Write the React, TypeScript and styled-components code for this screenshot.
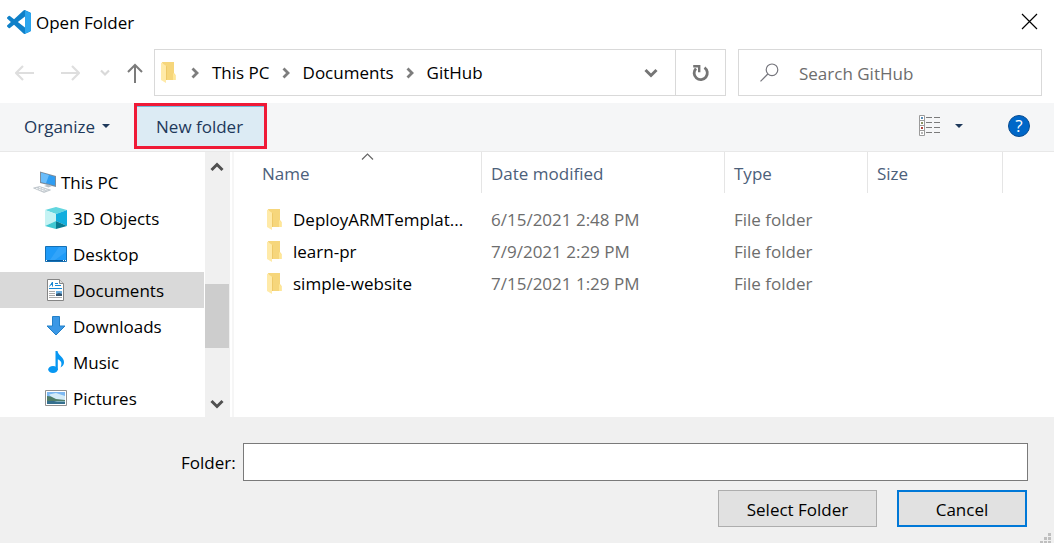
import React from 'react';
import styled, { createGlobalStyle, css } from 'styled-components';

const GlobalStyle = createGlobalStyle`
  * { box-sizing: border-box; }
  body {
    margin: 0;
    background: #ffffff;
    color: #000000;
    font-family: 'Open Sans', 'Noto Sans', sans-serif;
    font-size: 17px;
    line-height: 24px;
  }
  button, input {
    font: inherit;
    color: inherit;
  }
  svg { display: block; flex: none; }
`;

const Dialog = styled.main`
  display: flex;
  flex-direction: column;
  min-height: 100vh;
`;

const PlainButton = styled.button`
  display: flex;
  align-items: center;
  padding: 0;
  border: 0;
  background: transparent;
  white-space: nowrap;
`;

const Label = styled.span`
  padding-top: 2px;
  white-space: nowrap;
`;

/* Title bar */
const TitleBar = styled.header`
  display: flex;
  align-items: center;
  gap: 5px;
  height: 49px;
  padding: 0 16px 6px 7px;
`;

const Title = styled.h1`
  flex: 1;
  margin: 0;
  padding-top: 2px;
  font-size: 17px;
  font-weight: 400;
`;

/* Navigation row */
const NavRow = styled.nav`
  display: flex;
  align-items: center;
  height: 54px;
  padding: 0 12px 7px 15px;
`;

const History = styled.div`
  display: grid;
  grid-template-columns: 46px 39px 27px 16px;
  align-items: center;
  margin-right: 11px;
`;

const AddressBar = styled.div`
  display: flex;
  flex: 1;
  height: 47px;
  border: 1px solid #d9d9d9;
`;

const Crumbs = styled.div`
  display: flex;
  flex: 1;
  align-items: center;
  padding: 0 17px 0 6px;
`;

const CrumbList = styled.div`
  display: flex;
  gap: 12px;
  margin-left: 15px;
`;

const Crumb = styled(PlainButton)`
  gap: 13px;
`;

const Spacer = styled.div`
  flex: 1;
`;

const RefreshButton = styled(PlainButton)`
  justify-content: center;
  width: 50px;
  border-left: 1px solid #d9d9d9;
`;

const SearchBox = styled.label`
  display: flex;
  align-items: center;
  gap: 20px;
  width: 304px;
  height: 47px;
  margin-left: 12px;
  padding-left: 21px;
  border: 1px solid #d9d9d9;
`;

const SearchInput = styled.input`
  flex: 1;
  min-width: 0;
  padding: 2px 0 0;
  border: 0;
  outline: 0;
  background: transparent;
  &::placeholder { color: #6d6d6d; opacity: 1; }
`;

/* Command bar */
const CommandBar = styled.div`
  display: flex;
  align-items: center;
  height: 49px;
  padding: 0 24px 3px;
  border-bottom: 1px solid #e8e8e8;
  background: #f5f6f7;
  color: #1e395b;
`;

const OrganizeButton = styled(PlainButton)`
  gap: 7px;
  margin-right: 24px;
`;

const NewFolderButton = styled(PlainButton)`
  justify-content: center;
  width: 133px;
  height: 46px;
  padding-right: 2px;
  border: 3px solid #ef1a37;
  background: #dcebf4;
  box-shadow: inset 0 1px #70b9dd;
`;

const ViewButton = styled(PlainButton)`
  gap: 15px;
  margin-right: 45px;
`;

/* Body */
const Body = styled.div`
  display: flex;
  flex: 1;
`;

const Sidebar = styled.aside`
  width: 204px;
  padding: 12px 0 1px;
`;

const SidebarItem = styled(PlainButton)<{ $root?: boolean; $selected?: boolean }>`
  gap: 6px;
  width: 100%;
  height: 36px;
  padding-left: 45px;
  ${({ $root }) => $root && css`
    gap: 5px;
    padding-left: 33px;
  `}
  background: ${({ $selected }) => ($selected ? '#d9d9d9' : 'transparent')};
`;

const ScrollTrack = styled.div`
  display: flex;
  flex-direction: column;
  align-items: center;
  width: 25px;
  margin-left: 1px;
  padding: 10px 1px 8px 0;
  background: #f0f0f0;
`;

const ScrollThumb = styled.div`
  width: 100%;
  height: 64px;
  margin: 112px 0 auto;
  background: #cdcdcd;
`;

const Divider = styled.div`
  width: 2px;
  margin: 0 0 0 2px;
  background: #f6f6f6;
`;

const FilePane = styled.section`
  flex: 1;
  min-width: 0;
`;

const FileTable = styled.table`
  width: 100%;
  table-layout: fixed;
  border-collapse: separate;
  border-spacing: 0;
  color: #6d6d6d;
`;

const Col = styled.col<{ $width?: number }>`
  width: ${({ $width }) => ($width ? `${$width}px` : 'auto')};
`;

const HeadCell = styled.th<{ $first?: boolean }>`
  position: relative;
  height: 41px;
  padding: 2px 0 0 ${({ $first }) => ($first ? 28 : 9)}px;
  border-right: 1px solid #e5e5e5;
  color: #4c607a;
  font-weight: 400;
  text-align: left;
  &:last-child { border-right: 0; }
`;

const SortMark = styled.span`
  position: absolute;
  top: 1px;
  left: 127px;
`;

const GapRow = styled.tr`
  height: 10px;
`;

const Cell = styled.td`
  height: 32px;
  padding: 2px 0 0 9px;
  white-space: nowrap;
`;

const NameCell = styled.td`
  height: 32px;
  padding: 0 16px 0 33px;
  color: #000000;
`;

const FileName = styled.div`
  display: flex;
  align-items: center;
  gap: 11px;
`;

/* Footer */
const Footer = styled.footer`
  position: relative;
  padding: 26px 26px 16px 181px;
  background: #f0f0f0;
`;

const FolderField = styled.label`
  display: flex;
  align-items: center;
  gap: 7px;
`;

const FolderInput = styled.input`
  flex: 1;
  min-width: 0;
  height: 38px;
  padding: 0 8px;
  border: 1px solid #7a7a7a;
  background: #ffffff;
`;

const Actions = styled.div`
  display: flex;
  justify-content: flex-end;
  gap: 20px;
  margin: 9px 1px 0 0;
`;

const ActionButton = styled.button<{ $focused?: boolean }>`
  width: ${({ $focused }) => ($focused ? 130 : 159)}px;
  height: 37px;
  padding: 2px 0 0;
  border: ${({ $focused }) => ($focused ? '2px solid #0078d7' : '1px solid #adadad')};
  background: #e1e1e1;
`;

const Grip = styled.span`
  position: absolute;
  right: 3px;
  bottom: 0;
`;

/* Icons */
const CodeLogo = () => (
  <svg width="24" height="24" viewBox="0 0 24 24">
    <path fill="#0f80c8" fillRule="evenodd" d="M23.15 2.587L18.21.21a1.494 1.494 0 0 0-1.705.29l-9.46 8.63-4.12-3.128a.999.999 0 0 0-1.276.057L.327 7.261A1 1 0 0 0 .326 8.74L3.899 12 .326 15.26a1 1 0 0 0 .001 1.479L1.65 17.94a.999.999 0 0 0 1.276.057l4.12-3.128 9.46 8.63a1.492 1.492 0 0 0 1.704.29l4.942-2.377A1.5 1.5 0 0 0 24 20.06V3.939a1.5 1.5 0 0 0-.85-1.352zm-5.146 14.861L10.826 12l7.178-5.448v10.896z" />
    <path fill="#2ba5ee" d="M18 0.5L23.3 2.7Q24 3 24 4v16q0 1-.8 1.4L18 23.8z" />
  </svg>
);

const CloseIcon = () => (
  <svg width="17" height="17" viewBox="0 0 17 17" stroke="#000" strokeWidth="1.2">
    <path d="M1 1l15 15M16 1L1 16" />
  </svg>
);

const ArrowIcon = ({ forward }: { forward?: boolean }) => (
  <svg width="19" height="16" viewBox="0 0 19 16" fill="none" stroke="#dedede" strokeWidth="2.2">
    <path d={forward ? 'M0 8h17.5M11 1l7 7-7 7' : 'M19 8H1.5M8 1L1 8l7 7'} />
  </svg>
);

const UpIcon = () => (
  <svg width="16" height="20" viewBox="0 0 16 20" fill="none" stroke="#7b7b7b" strokeWidth="2">
    <path d="M8 20V2M1 9l7-7 7 7" />
  </svg>
);

const SmallChevron = () => (
  <svg width="10" height="8" viewBox="0 0 10 8" fill="none" stroke="#d9d9d9" strokeWidth="2.2">
    <path d="M1 1.5l4 4 4-4" />
  </svg>
);

const CrumbChevron = () => (
  <svg width="8" height="12" viewBox="0 0 8 12" fill="none" stroke="#7d7d7d" strokeWidth="2.8">
    <path d="M1.500 1.500L6 6l-4.500 4.500" />
  </svg>
);

const Chevron = ({ up, color }: { up?: boolean; color: string }) => (
  <svg width="14" height="10" viewBox="0 0 14 10" fill="none" stroke={color} strokeWidth="3">
    <path d={up ? 'M1.500 8L7 2.500 12.500 8' : 'M1.500 2L7 7.500 12.500 2'} />
  </svg>
);

const RefreshIcon = () => (
  <svg width="18" height="18" viewBox="0 0 18 18" fill="none" stroke="#757575" strokeWidth="2.800">
    <path d="M12.500 3.600a6.600 6.600 0 1 1-8.500.8" />
    <path d="M1.200 2.200h6v6" strokeWidth="2.400" />
  </svg>
);

const SearchIcon = () => (
  <svg width="19" height="19" viewBox="0 0 19 19" fill="none" stroke="#75757c" strokeWidth="1.200">
    <circle cx="12" cy="6.800" r="5.800" />
    <path d="M7.800 11L.5 18.300" />
  </svg>
);

const Triangle = () => (
  <svg width="8" height="4" viewBox="0 0 8 4" fill="#1e395b">
    <path d="M0 0h8L4 4z" />
  </svg>
);

const ViewIcon = () => (
  <svg width="21" height="21" viewBox="0 0 21 21">
    <path fill="#fff" stroke="#9b9b9b" d="M.5.5h5v20h-5zM.5 5.500h5M.5 10.500h5M.5 15.500h5" />
    <path fill="#5a8fb8" d="M2 2h2v2H2z" />
    <path fill="#8a9463" d="M2 7h2v2H2z" />
    <path fill="#b0453c" d="M2 12h2v2H2z" />
    <path fill="#b5b5b5" d="M2 17h2v2H2z" />
    <path stroke="#7b7b7b" d="M7 2.500h6M15 2.500h6M7 7.500h6M15 7.500h6M7 12.500h6M15 12.500h6M7 17.500h6M15 17.500h6" />
  </svg>
);

const HelpButton = styled(PlainButton)`
  justify-content: center;
  width: 22px;
  height: 22px;
  border: 1px solid #084c91;
  border-radius: 50%;
  background: #0067c8;
  color: #ffffff;
  line-height: 20px;
`;

const FolderIcon = () => (
  <svg width="15" height="21" viewBox="0 0 15 21">
    <path fill="#f6d67b" d="M1 0h12v11l1.500 2v5H5z" />
    <path fill="#ffe797" d="M12 11l2.500 2v5H12z" />
    <path fill="#ffeaa8" d="M0 .500l5 3.200V21l-5-3z" />
    <path fill="#edc664" d="M5 3.700l.8 1V18H5z" />
  </svg>
);

const ComputerIcon = () => (
  <svg width="23" height="22" viewBox="0 0 23 22">
    <path fill="#7d8c9a" d="M7 .5l16 4.500v11L7 12z" />
    <path fill="#2f9df2" d="M8 1.800l14 4v8.700L8 11z" />
    <path fill="#6bbdfa" d="M8 1.800l8 2.300-3 8.100L8 11z" />
    <path fill="#b8c1c8" d="M11 15l4-1.500 4 1.500-3.500 1.500z" />
    <path fill="#cbd1d6" stroke="#a5afb7" strokeWidth=".5" d="M.5 17l6-1.500 11 3.500-6.500 2.500z" />
    <path stroke="#f3f5f6" d="M3 17.300l9 3M6 16.300l9 3" strokeDasharray="2 1" />
  </svg>
);

const CubeIcon = () => (
  <svg width="22" height="22" viewBox="0 0 22 22">
    <path fill="#62d6df" d="M0 3l11-3 11 3-11 4z" />
    <path fill="#c5f3f4" d="M0 3l11 4v7L0 19z" />
    <path fill="#12aede" d="M22 3L11 7v7l11 5z" />
    <path fill="#41c8d2" d="M0 19l11-5v8z" />
    <path fill="#087b91" d="M22 19l-11-5v8z" />
  </svg>
);

const DesktopIcon = () => (
  <svg width="22" height="16" viewBox="0 0 22 16">
    <path fill="#1f9bf8" stroke="#1470b5" d="M.5.5h21v15H.5z" />
    <path fill="#45adfb" d="M14 1h7v5L10 14H5z" opacity=".5" />
    <path fill="#075a9c" d="M1 14h20v1H1z" />
    <path fill="#fff" d="M1 14h1v1H1zM18 14h1v1h-1zM20 14h1v1h-1z" />
  </svg>
);

const DocumentIcon = () => (
  <svg width="22" height="22" viewBox="0 0 22 22">
    <path fill="#fff" stroke="#858585" d="M2.500.5h12l4 4v17h-16z" />
    <path fill="#ddd" stroke="#858585" d="M14.500.5v4h4" />
    <path fill="none" stroke="#1787d4" d="M4.500 7.500L7.500 3v4.500M6 5.500h1.500" />
    <path stroke="#1787d4" d="M10 4.500h3M10 6.500h6M4 9.500h13" />
    <path stroke="#aaa" d="M4 12.500h6M4 14.500h6M4 16.500h6M4 18.500h13" />
    <path fill="#6badde" d="M11 12h6v5h-6z" />
    <path fill="#35546e" d="M11 17v-2l3-1 3 1v2z" />
  </svg>
);

const DownloadIcon = () => (
  <svg width="22" height="20" viewBox="0 0 22 20">
    <path fill="#3b98e6" stroke="#2380c8" d="M7.500.5h7v9.500H20l-9 9-9-9h5.500z" />
  </svg>
);

const MusicIcon = () => (
  <svg width="22" height="22" viewBox="0 0 22 22" fill="#0797f2">
    <ellipse cx="8" cy="18.500" rx="4.800" ry="3.500" />
    <path d="M10.500 0h2c.5 4.500 7 6.500 6.500 11.500 0 2.200-1.500 4-3.500 5 1.500-3.200 1.600-6.300-2.700-8.200V19h-2.300z" />
  </svg>
);

const PictureIcon = () => (
  <svg width="22" height="16" viewBox="0 0 22 16">
    <path fill="#fff" stroke="#919191" d="M.5.5h21v15H.5z" />
    <path fill="#7db8f2" d="M2 2h18v12H2z" />
    <path fill="#d3ebf8" d="M4 4.500l7-1.500 9 3v4H9z" />
    <path fill="#4f7c67" d="M2 6l4 .5 5 2.500 9 1v1.500H2z" />
    <path fill="#356f8e" d="M2 11h18v3H2z" />
    <path fill="#80aebd" d="M9 11h11v1H12z" />
  </svg>
);

const SortIcon = () => (
  <svg width="13" height="7" viewBox="0 0 13 7" fill="none" stroke="#666" strokeWidth="1.200">
    <path d="M1 6.500l5.500-5.500L12 6.500" />
  </svg>
);

const GripIcon = () => (
  <svg width="11" height="10" viewBox="0 0 11 10" fill="#bfbfbf">
    <path d="M8 0h3v3H8zM4 4h3v3H4zM8 4h3v3H8zM0 8h3v2H0zM4 8h3v2H4zM8 8h3v2H8z" />
  </svg>
);

const places = [
  { label: 'This PC', icon: <ComputerIcon />, root: true },
  { label: '3D Objects', icon: <CubeIcon /> },
  { label: 'Desktop', icon: <DesktopIcon /> },
  { label: 'Documents', icon: <DocumentIcon />, selected: true },
  { label: 'Downloads', icon: <DownloadIcon /> },
  { label: 'Music', icon: <MusicIcon /> },
  { label: 'Pictures', icon: <PictureIcon /> },
];

const files = [
  { name: 'DeployARMTemplat...', modified: '6/15/2021 2:48 PM' },
  { name: 'learn-pr', modified: '7/9/2021 2:29 PM' },
  { name: 'simple-website', modified: '7/15/2021 1:29 PM' },
];

export default function App() {
  return (
    <Dialog>
      <GlobalStyle />
      <TitleBar>
        <CodeLogo />
        <Title>Open Folder</Title>
        <PlainButton aria-label="Close"><CloseIcon /></PlainButton>
      </TitleBar>

      <NavRow>
        <History>
          <PlainButton aria-label="Back"><ArrowIcon /></PlainButton>
          <PlainButton aria-label="Forward"><ArrowIcon forward /></PlainButton>
          <PlainButton aria-label="Recent locations"><SmallChevron /></PlainButton>
          <PlainButton aria-label="Up"><UpIcon /></PlainButton>
        </History>
        <AddressBar>
          <Crumbs>
            <FolderIcon />
            <CrumbList>
              {['This PC', 'Documents', 'GitHub'].map((crumb) => (
                <Crumb key={crumb}><CrumbChevron />{crumb}</Crumb>
              ))}
            </CrumbList>
            <Spacer />
            <PlainButton aria-label="Previous locations"><Chevron color="#757575" /></PlainButton>
          </Crumbs>
          <RefreshButton aria-label="Refresh"><RefreshIcon /></RefreshButton>
        </AddressBar>
        <SearchBox>
          <SearchIcon />
          <SearchInput aria-label="Search GitHub" placeholder="Search GitHub" />
        </SearchBox>
      </NavRow>

      <CommandBar>
        <OrganizeButton><Label>Organize</Label><Triangle /></OrganizeButton>
        <NewFolderButton><Label>New folder</Label></NewFolderButton>
        <Spacer />
        <ViewButton aria-label="Change view"><ViewIcon /><Triangle /></ViewButton>
        <HelpButton aria-label="Help">?</HelpButton>
      </CommandBar>

      <Body>
        <Sidebar>
          {places.map(({ label, icon, root, selected }) => (
            <SidebarItem key={label} $root={root} $selected={selected}>
              {icon}
              <Label>{label}</Label>
            </SidebarItem>
          ))}
        </Sidebar>
        <ScrollTrack>
          <Chevron up color="#505050" />
          <ScrollThumb />
          <Chevron color="#505050" />
        </ScrollTrack>
        <Divider />
        <FilePane>
          <FileTable>
            <colgroup>
              <Col $width={248} />
              <Col $width={243} />
              <Col $width={143} />
              <Col $width={135} />
              <Col />
            </colgroup>
            <thead>
              <tr>
                <HeadCell $first>Name<SortMark><SortIcon /></SortMark></HeadCell>
                <HeadCell>Date modified</HeadCell>
                <HeadCell>Type</HeadCell>
                <HeadCell>Size</HeadCell>
                <HeadCell as="td" />
              </tr>
            </thead>
            <tbody>
              <GapRow />
              {files.map(({ name, modified }) => (
                <tr key={name}>
                  <NameCell>
                    <FileName><FolderIcon /><Label>{name}</Label></FileName>
                  </NameCell>
                  <Cell>{modified}</Cell>
                  <Cell>File folder</Cell>
                </tr>
              ))}
            </tbody>
          </FileTable>
        </FilePane>
      </Body>

      <Footer>
        <FolderField>
          <Label>Folder:</Label>
          <FolderInput type="text" />
        </FolderField>
        <Actions>
          <ActionButton>Select Folder</ActionButton>
          <ActionButton $focused>Cancel</ActionButton>
        </Actions>
        <Grip><GripIcon /></Grip>
      </Footer>
    </Dialog>
  );
}
